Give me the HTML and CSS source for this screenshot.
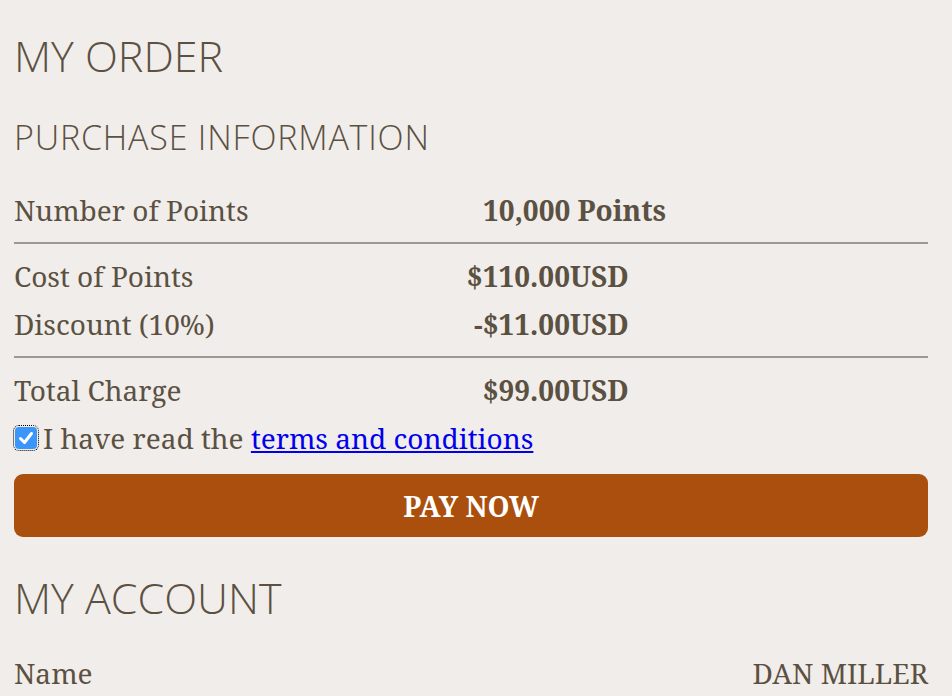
FILE: index.html
```html
<!DOCTYPE html>
<html lang="en">
<head>
<meta charset="utf-8">
<title>My Order</title>
<link rel="stylesheet" href="styles.css">
</head>
<body>
<main class="page">
  <h1 class="title">MY ORDER</h1>
  <h2 class="subtitle">PURCHASE INFORMATION</h2>

  <div class="row">
    <span class="label">Number of Points</span>
    <span class="value points">10,000 Points</span>
  </div>
  <hr class="rule">
  <div class="row">
    <span class="label">Cost of Points</span>
    <span class="value"><span class="amount">$110.00</span><span class="cur">USD</span></span>
  </div>
  <div class="row">
    <span class="label">Discount (10%)</span>
    <span class="value"><span class="amount">-$11.00</span><span class="cur">USD</span></span>
  </div>
  <hr class="rule">
  <div class="row">
    <span class="label">Total Charge</span>
    <span class="value"><span class="amount">$99.00</span><span class="cur">USD</span></span>
  </div>

  <label class="agree">
    <span class="check"><svg class="tick" viewBox="0 0 22 22"><path d="M5.5 11.5 L9.5 15.5 L16.5 6.5" fill="none" stroke="#fff" stroke-width="3" stroke-linecap="round" stroke-linejoin="round"/></svg></span>
    <span>I have read the <a href="#" class="link">terms and conditions</a></span>
  </label>

  <button class="pay">PAY NOW</button>

  <h1 class="title account">MY ACCOUNT</h1>
  <div class="row account-row">
    <span class="label">Name</span>
    <span class="name">DAN MILLER</span>
  </div>
</main>
</body>
</html>
```

FILE: styles.css
```css
html, body {
  margin: 0;
  padding: 0;
  background: #f1edea;
}
body {
  color: #5b5142;
  font-family: "Noto Serif", "DejaVu Serif", serif;
}
.page {
  padding: 0 24px 0 14px;
}
.title {
  font-family: "Open Sans", sans-serif;
  font-weight: 300;
  font-size: 43px;
  line-height: 56px;
  margin: 0;
  padding-top: 28px;
}
.subtitle {
  font-family: "Open Sans", sans-serif;
  font-weight: 300;
  font-size: 34px;
  line-height: 44px;
  margin: 0;
  padding-top: 31px;
  padding-bottom: 27px;
  letter-spacing: 0.8px;
}
.row {
  display: grid;
  grid-template-columns: 440px 1fr;
  height: 48px;
  align-items: center;
  font-size: 28px;
}
.value {
  font-weight: bold;
  display: flex;
}
.points {
  padding-left: 29px;
}
.amount {
  display: inline-block;
  width: 116px;
  text-align: right;
}
.rule {
  border: 0;
  height: 2px;
  background: #9b9896;
  margin: 8px 0;
}
.agree {
  display: flex;
  align-items: center;
  height: 48px;
  font-size: 28px;
  gap: 6px;
}
.check {
  flex: none;
  width: 22px;
  height: 22px;
  margin-left: 1px;
  border-radius: 4px;
  background: #3a97f9;
  display: block;
  outline: 1px dotted #000;
  outline-offset: 1px;
}
.tick {
  display: block;
  width: 22px;
  height: 22px;
}
.link {
  color: #0000ee;
  text-decoration: underline;
}
.pay {
  display: block;
  width: 100%;
  height: 63px;
  margin-top: 12px;
  border: 0;
  border-radius: 9px;
  background: #aa4f0d;
  color: #fff;
  font-family: "Noto Serif", "DejaVu Serif", serif;
  font-weight: bold;
  font-size: 28px;
}
.account {
  padding-top: 33px;
}
.account-row {
  grid-template-columns: 1fr auto;
  margin-top: 23px;
}
.name {
  text-align: right;
}
```
